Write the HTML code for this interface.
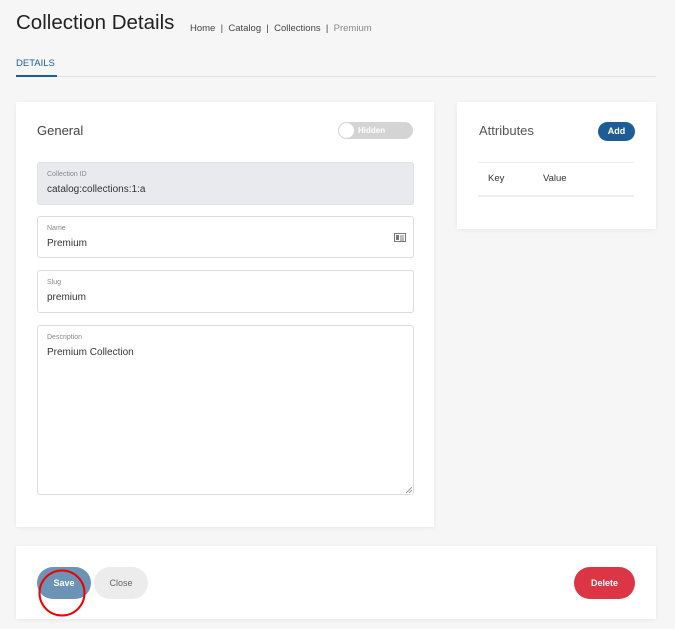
<!DOCTYPE html>
<html><head><style>
body{margin:0;width:675px;height:629px;background:#f6f6f6;font-family:"Liberation Sans",sans-serif;position:relative;overflow:hidden;color:#333}
.a{position:absolute}
.card{position:absolute;background:#fff;box-shadow:0 1px 4px rgba(0,0,0,.06)}
.f{position:absolute;left:37px;width:375px;border:1px solid #dcdcdc;border-radius:3px;background:#fff}
.f .l{position:absolute;left:9px;top:8px;font-size:7px;color:#888}
.f .v{position:absolute;left:9px;top:21px;font-size:10px;color:#333}
.btn{position:absolute;border-radius:16px;font-size:9px;font-weight:bold;text-align:center;line-height:32px}
</style></head><body>
<div class="a" style="left:16px;top:11px;font-size:20.5px;color:#222">Collection Details</div>
<div class="a" style="left:190px;top:23px;font-size:9.5px;color:#444">Home &nbsp;|&nbsp; Catalog &nbsp;|&nbsp; Collections &nbsp;|&nbsp; <span style="color:#888">Premium</span></div>
<div class="a" style="left:16px;top:58px;font-size:9.5px;color:#1d5c95">DETAILS</div>
<div class="a" style="left:16px;top:76px;width:640px;height:1px;background:#e2e2e2"></div>
<div class="a" style="left:16px;top:75px;width:41px;height:2px;background:#1d5c95"></div>

<div class="card" style="left:16px;top:102px;width:418px;height:425px"></div>
<div class="a" style="left:37px;top:123px;font-size:13px;color:#444">General</div>
<div class="a" style="left:338px;top:122px;width:75px;height:17px;border-radius:9px;background:#d4d4d4"></div>
<div class="a" style="left:339px;top:123px;width:15px;height:15px;border-radius:50%;background:#fff"></div>
<div class="a" style="left:358px;top:126px;font-size:8px;color:#fff;font-weight:bold">Hidden</div>

<div class="f" style="top:162px;height:41px;background:#e8eaed;border-color:#e0e2e5"><div class="l">Collection ID</div><div class="v">catalog:collections:1:a</div></div>
<div class="f" style="top:216px;height:40px"><div class="l">Name</div><div class="v">Premium</div>
<svg class="a" style="left:356px;top:16px" width="12" height="9"><rect x="0.5" y="0.5" width="11" height="8" fill="none" stroke="#777"/><rect x="2" y="2" width="3" height="5" fill="#777"/><path d="M6 3h4M6 5h4M6 7h4" stroke="#777"/></svg></div>
<div class="f" style="top:270px;height:41px"><div class="l">Slug</div><div class="v">premium</div></div>
<div class="f" style="top:325px;height:168px"><div class="l">Description</div><div class="v">Premium Collection</div>
<svg class="a" style="left:368px;top:161px" width="6" height="6"><path d="M0 6L6 0M3 6L6 3" stroke="#999"/></svg></div>

<div class="card" style="left:457px;top:102px;width:199px;height:127px"></div>
<div class="a" style="left:479px;top:123px;font-size:13px;color:#555">Attributes</div>
<div class="btn" style="left:598px;top:122px;width:37px;height:19px;line-height:19px;background:#1d5c95;color:#fff">Add</div>
<div class="a" style="left:478px;top:162px;width:156px;height:1px;background:#eee"></div>
<div class="a" style="left:488px;top:173px;font-size:9.5px;color:#333">Key</div>
<div class="a" style="left:543px;top:173px;font-size:9.5px;color:#333">Value</div>
<div class="a" style="left:478px;top:195px;width:156px;height:2px;background:#eee"></div>

<div class="card" style="left:16px;top:546px;width:640px;height:73px"></div>
<div class="btn" style="left:37px;top:567px;width:54px;background:#6a93b5;color:#fff">Save</div>
<div class="btn" style="left:94px;top:567px;width:54px;background:#ececec;color:#666;font-weight:normal">Close</div>
<div class="btn" style="left:574px;top:567px;width:61px;background:#dc3545;color:#fff">Delete</div>
<svg class="a" style="left:36px;top:568px" width="52" height="52"><ellipse cx="26" cy="25" rx="22.5" ry="22.5" fill="none" stroke="#e00" stroke-width="2"/></svg>
</body></html>
